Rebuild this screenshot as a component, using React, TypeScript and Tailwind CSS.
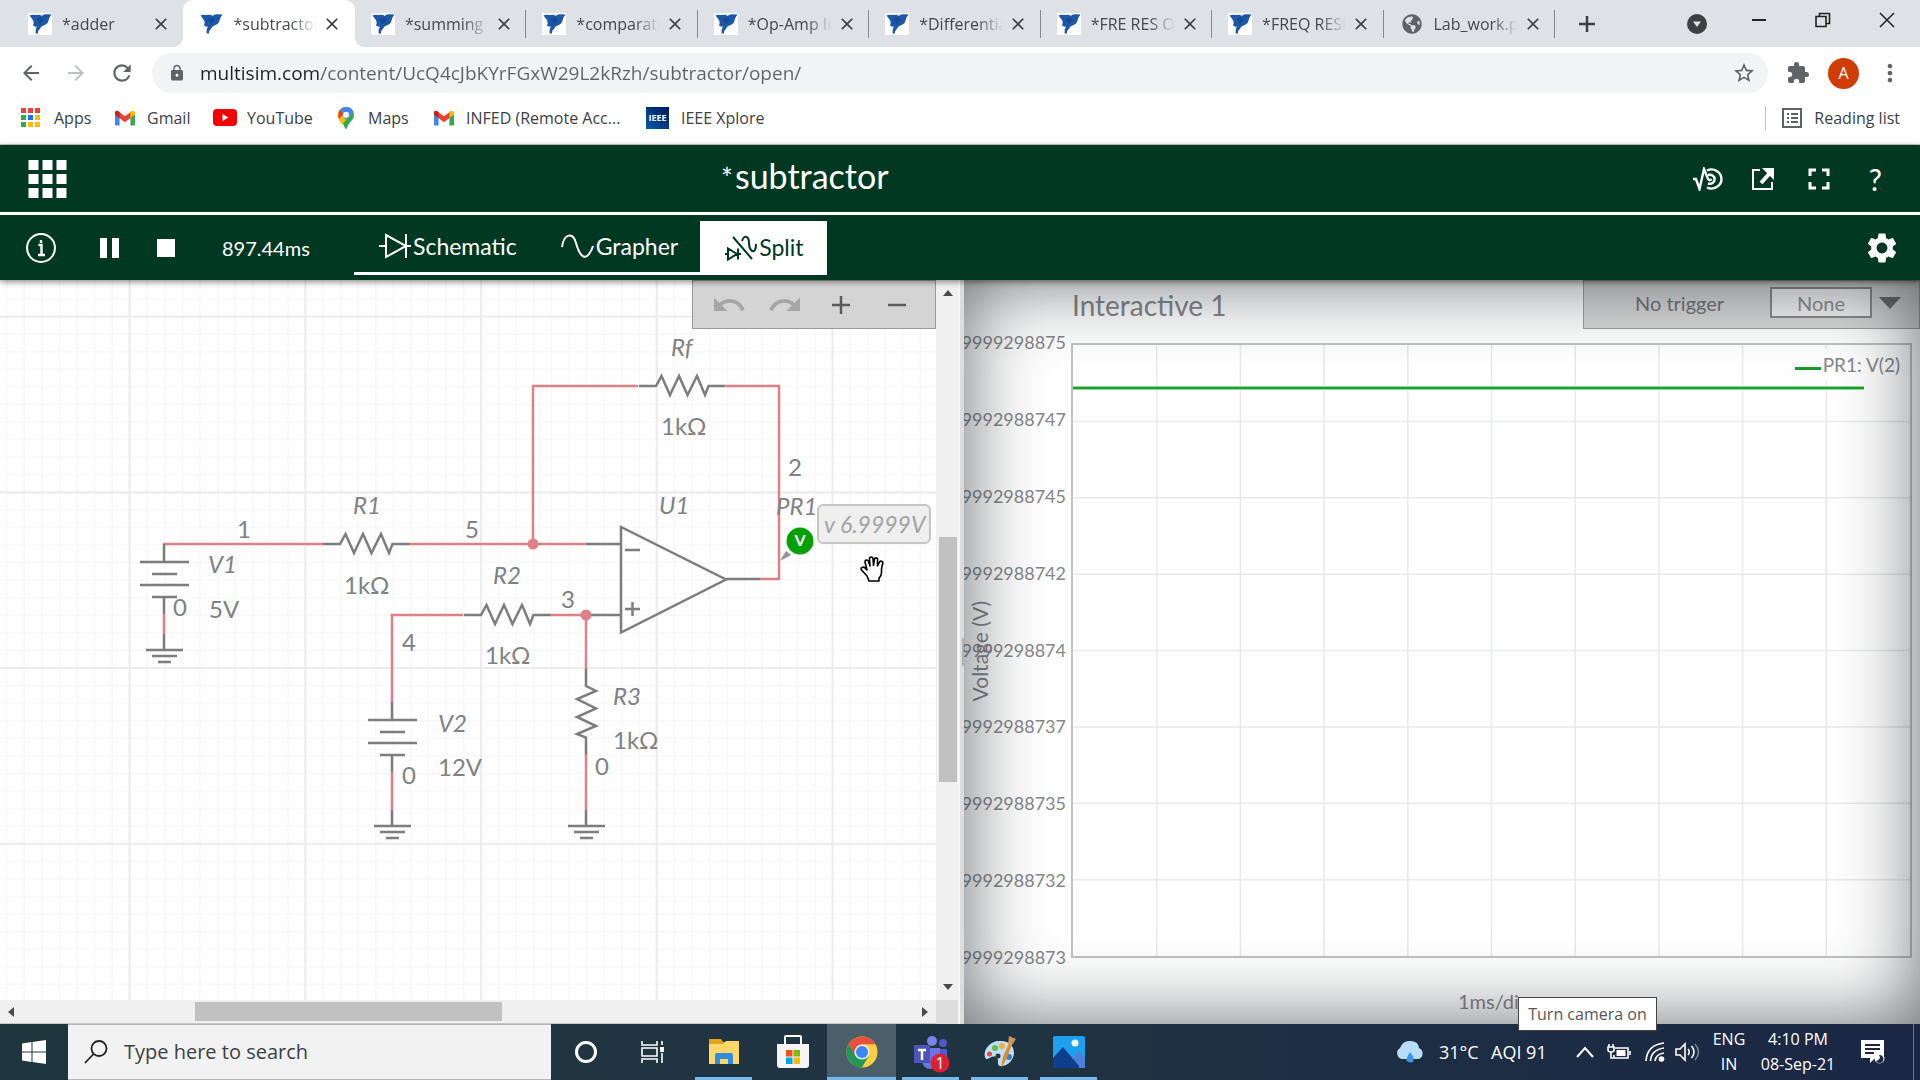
import React from 'react';
import { FaGlobeAmericas } from 'react-icons/fa';
import {
  MdArrowBack,
  MdArrowForward,
  MdClose,
  MdExtension,
  MdFullscreen,
  MdLock,
  MdMoreVert,
  MdRedo,
  MdRefresh,
  MdSettings,
  MdStarBorder,
  MdUndo,
} from 'react-icons/md';

/* ---------- small drawings ---------- */

function EagleIcon() {
  return (
    <svg viewBox="0 0 24 22" className="h-[22px] w-6 shrink-0 bg-white" aria-hidden="true">
      <path
        d="M1.500 2.500 Q4 1.200 7 2 L12 1.800 L13.500 3 Q15.500 .8 18.500 1.200 L23.500 1.600 L21.500 4.500 L20.500 7.500 Q20 10.500 16.500 12 L13.500 13.500 Q12 16 10.500 17.500 L9.500 21 L7.500 20 Q7 16 9 13.500 L7.500 13.800 L5 12.500 Q6.500 9 4.500 6.500 Z"
        fill="#1d57a8"
      />
      <path d="M8 6 L13 4.500 L16 7 L12 11 Z" fill="#164a94" />
    </svg>
  );
}

function GmailIcon() {
  return (
    <svg viewBox="0 0 24 18" className="h-4 w-5 shrink-0" aria-hidden="true">
      <path d="M0 3v13.500Q0 18 1.500 18H5.500V7Z" fill="#4285f4" />
      <path d="M24 3v13.500Q24 18 22.500 18H18.500V7Z" fill="#34a853" />
      <path d="M0 2.500Q.5 -.5 3.500 .5L12 7 20.500 .5 V7.500L12 14 0 5Z" fill="#ea4335" />
      <path d="M18.500 2L20.500 .5Q23.500 -.5 24 2.500V5L18.500 9Z" fill="#fbbc04" />
      <path d="M0 2.500V5L5.500 9V2L3.500 .5Q.5 -.5 0 2.500Z" fill="#c5221f" />
    </svg>
  );
}

function AppsIcon() {
  const colors = ['#ea4335', '#ea4335', '#ea4335', '#34a853', '#1a73e8', '#fbbc04', '#34a853', '#fbbc04', '#fbbc04'];
  return (
    <svg viewBox="0 0 19 19" className="size-[19px] shrink-0" aria-hidden="true">
      {colors.map((c, i) => (
        <rect key={i} x={(i % 3) * 7} y={Math.floor(i / 3) * 7} width="5" height="5" fill={c} />
      ))}
    </svg>
  );
}

function YouTubeIcon() {
  return (
    <svg viewBox="0 0 24 17" className="h-[17px] w-6 shrink-0" aria-hidden="true">
      <rect width="24" height="17" rx="4" fill="#f60000" />
      <path d="M9.500 5v7l6-3.500z" fill="#fff" />
    </svg>
  );
}

function MapsIcon() {
  return (
    <svg viewBox="0 0 16 22" className="h-[22px] w-4 shrink-0" aria-hidden="true">
      <path d="M8 0a8 8 0 0 1 8 8c0 5-5 7-6.500 12Q8 24 6.500 20C5 15 0 13 0 8a8 8 0 0 1 8-8z" fill="#34a853" />
      <path d="M8 0a8 8 0 0 1 7.500 5L4 17.500Q0 13 0 8A8 8 0 0 1 8 0z" fill="#fbbc04" />
      <path d="M8 0a8 8 0 0 1 7.500 5L8 13 1.500 4Q4 0 8 0z" fill="#4285f4" />
      <path d="M1.800 3L6 7 1 12Q-1 7 1.800 3z" fill="#ea4335" />
      <circle cx="8" cy="7.800" r="3" fill="#fff" />
    </svg>
  );
}

function ReadingListIcon() {
  return (
    <svg viewBox="0 0 20 20" className="size-5 shrink-0" fill="none" stroke="#5f6368" strokeWidth="2" aria-hidden="true">
      <rect x="1" y="1" width="18" height="18" />
      <path d="M5 6h2M5 10h2M5 14h2M9 6h7M9 10h7M9 14h7" />
    </svg>
  );
}

function GridIcon() {
  return (
    <svg viewBox="0 0 40 40" className="size-10" fill="#fff" aria-hidden="true">
      {[0, 1, 2].map((r) =>
        [0, 1, 2].map((c) => <rect key={`${r}-${c}`} x={c * 14 + 0.5} y={r * 14 + 1} width="10" height="10" />),
      )}
    </svg>
  );
}

function WaveIcon() {
  return (
    <svg viewBox="0 0 34 24" className="h-6 w-[34px]" fill="none" stroke="currentColor" strokeWidth="2" aria-hidden="true">
      <path d="M1 13C3 -1 12 -2 15 9S23 27 28 20Q31 16 32 12" />
    </svg>
  );
}

function DiodeIcon() {
  return (
    <svg viewBox="0 0 34 26" className="h-[26px] w-[34px]" fill="none" stroke="currentColor" strokeWidth="2" aria-hidden="true">
      <path d="M1 13h7M8 2v22L28 13zM28 1v24M28 13h5" />
    </svg>
  );
}

function SplitIcon() {
  return (
    <svg viewBox="0 0 34 26" className="h-[26px] w-[34px]" fill="none" stroke="currentColor" strokeWidth="2" aria-hidden="true">
      <path d="M1 19h3M4 13.500v11L13 19zM14 13.500v11M14 19h3" />
      <path d="M9 2L28 24" />
      <path d="M18 6C20 -1 25 1 25 8S29 18 31 15Q32 13 32 9" />
    </svg>
  );
}

function HandCursor() {
  return (
    <svg viewBox="0 0 26 26" className="absolute left-[860px] top-[276px] size-[26px]" aria-hidden="true">
      <path
        d="M9 25L7 20 2 14.500Q0 12.500 2 11.500T5 12L7 14 5 6Q5 4 6.500 4T8.500 5.500L10 10 9.500 3Q9.500 1 11.200 1T13 3L13.500 9.500 14.500 3Q15 1.500 16.500 2T17.500 4.500L17.500 10 19.500 6Q20.500 4.500 22 5.500T22.500 8L21.500 13Q22 20 19 22L19 25Z"
        fill="#fff"
        stroke="#000"
        strokeWidth="1.600"
        strokeLinejoin="round"
      />
    </svg>
  );
}

/* ---------- browser chrome ---------- */

const TABS = ['*adder', '*subtractor', '*summing a', '*comparator', '*Op-Amp In', '*Differentiator', '*FRE RES OF', '*FREQ RESP', 'Lab_work.pdf'];

function TabStrip() {
  return (
    <div className="flex h-[47px] bg-[#dee1e6] pl-3">
      <div className="flex w-[1543px] min-w-0">
        {TABS.map((t, i) => {
          const active = i === 1;
          return (
            <div
              key={t}
              className={
                active
                  ? 'relative flex min-w-0 flex-1 items-center rounded-t-[10px] bg-white pl-4 before:absolute before:bottom-0 before:-left-2.5 before:size-2.5 before:bg-[radial-gradient(circle_at_0_0,transparent_10px,#fff_10px)] after:absolute after:-right-2.5 after:bottom-0 after:size-2.5 after:bg-[radial-gradient(circle_at_100%_0,transparent_10px,#fff_10px)]'
                  : 'relative flex min-w-0 flex-1 items-center pl-4'
              }
            >
              {i === 8 ? <FaGlobeAmericas className="mx-0.5 size-5 shrink-0 text-[#5f6368]" /> : <EagleIcon />}
              <button className="ml-2.5 w-[84px] overflow-hidden whitespace-nowrap text-left text-base text-[#45494d] [mask-image:linear-gradient(to_right,#000_58px,transparent_84px)]">
                {t}
              </button>
              <button aria-label={`Close ${t}`} className="ml-[5px] text-[#3c4043]">
                <MdClose className="size-5" />
              </button>
              {i > 1 && <span className="absolute right-0 h-7 w-px bg-[#85888c]" />}
            </div>
          );
        })}
      </div>
      <button aria-label="New tab" className="ml-5 flex w-6 items-center justify-center">
        <svg viewBox="0 0 18 18" className="size-[18px]" stroke="#3c4043" strokeWidth="2.500" aria-hidden="true">
          <path d="M9 1v16M1 9h16" />
        </svg>
      </button>
      <div className="ml-auto flex pr-px">
        <button aria-label="Search tabs" className="mr-5 flex items-center">
          <svg viewBox="0 0 20 20" className="size-5" aria-hidden="true">
            <circle cx="10" cy="10" r="10" fill="#3c4043" />
            <path d="M6 7.500h8L10 13z" fill="#dee1e6" />
          </svg>
        </button>
        <button aria-label="Minimize" className="flex h-10 w-16 items-center justify-center">
          <span className="h-0.5 w-3.5 bg-[#222]" />
        </button>
        <button aria-label="Restore" className="flex h-10 w-16 items-center justify-center">
          <svg viewBox="0 0 16 16" className="size-4" fill="none" stroke="#222" strokeWidth="1.600" aria-hidden="true">
            <path d="M1 4.500h10v10H1zM4.500 4.500V1.500H14.500v10H11" />
          </svg>
        </button>
        <button aria-label="Close window" className="flex h-10 w-16 items-center justify-center">
          <svg viewBox="0 0 16 16" className="size-4" stroke="#222" strokeWidth="1.500" aria-hidden="true">
            <path d="M1 1l14 14M15 1L1 15" />
          </svg>
        </button>
      </div>
    </div>
  );
}

function AddressRow() {
  return (
    <div className="flex h-[50px] items-center bg-white pt-0.5 pl-[19px]">
      <button aria-label="Back" className="w-[45px] text-[#5f6368]"><MdArrowBack className="size-6" /></button>
      <button aria-label="Forward" className="w-[45px] text-[#bdc1c6]"><MdArrowForward className="size-6" /></button>
      <button aria-label="Reload" className="w-[43px] text-[#5f6368]"><MdRefresh className="size-[26px]" /></button>
      <div className="flex h-10 min-w-0 flex-1 items-center rounded-full bg-[#f1f3f4] pr-3 pl-4">
        <MdLock className="size-[18px] shrink-0 text-[#5f6368]" />
        <input
          aria-label="Address"
          defaultValue="multisim.com/content/UcQ4cJbKYrFGxW29L2kRzh/subtractor/open/"
          className="ml-3.5 min-w-0 flex-1 bg-[linear-gradient(to_right,#202124_121px,#5f6368_121px)] bg-clip-text text-[19px] text-transparent outline-none"
        />
        <button aria-label="Bookmark" className="text-[#5f6368]"><MdStarBorder className="size-6" /></button>
      </div>
      <button aria-label="Extensions" className="ml-[18px] text-[#5f6368]"><MdExtension className="size-6" /></button>
      <button aria-label="Profile" className="ml-[18px] flex size-[31px] items-center justify-center rounded-full bg-[#d03c06] text-base text-white">A</button>
      <button aria-label="Menu" className="mr-4 ml-[17px] text-[#5f6368]"><MdMoreVert className="size-7" /></button>
    </div>
  );
}

function Bookmarks() {
  return (
    <nav className="flex h-[48px] items-center border-b border-[#c9cccf] bg-white pr-5 pb-1.5 pl-[21px] text-base text-[#3c4043]">
      <a href="#apps" className="flex w-[94px] items-center gap-3.5"><AppsIcon />Apps</a>
      <a href="#gmail" className="flex w-[98px] items-center gap-3"><GmailIcon />Gmail</a>
      <a href="#youtube" className="flex w-[125px] items-center gap-2.5"><YouTubeIcon />YouTube</a>
      <a href="#maps" className="flex w-[96px] items-center gap-3.5"><MapsIcon />Maps</a>
      <a href="#infed" className="flex w-[212px] items-center gap-3 whitespace-nowrap"><GmailIcon />INFED (Remote Acc...</a>
      <a href="#ieee" className="flex items-center gap-3 whitespace-nowrap">
        <span className="flex h-[22px] w-[23px] items-center justify-center bg-linear-to-tr from-[#0a5ca8] to-[#02145e] text-[9px] font-bold text-white">IEEE</span>
        IEEE Xplore
      </a>
      <button className="ml-auto flex items-center gap-3 border-l border-[#c4c7ca] pl-4 whitespace-nowrap"><ReadingListIcon />Reading list</button>
    </nav>
  );
}

/* ---------- application header ---------- */

function AppHeader() {
  return (
    <header className="relative z-10 font-[Lato,sans-serif] text-white shadow-[0_2px_6px_rgba(0,0,0,0.45)]">
      <div className="flex h-[67px] items-center bg-[#003822] px-7">
        <button aria-label="Menu grid"><GridIcon /></button>
        <h1 className="flex flex-1 items-baseline gap-0.5 pb-1 pl-[653px] text-[34px] leading-10"><span className="text-[28px]">*</span>subtractor</h1>
        <button aria-label="Interactive simulation">
          <svg viewBox="0 0 32 24" className="h-6 w-8" fill="none" stroke="#fff" strokeWidth="2.400" aria-hidden="true">
            <path d="M1 12h3l3.500 10L12 2l4 10q1.500 2.500 3.500 0" />
            <path d="M15 3.500a10 9.500 0 1 1 0 17M16 8a5 4.500 0 1 1 0 8.500" />
          </svg>
        </button>
        <button aria-label="Open externally" className="ml-7">
          <svg viewBox="0 0 22 22" className="size-[22px]" fill="none" stroke="#fff" strokeWidth="2" aria-hidden="true">
            <path d="M8 2H1v19h19v-7" />
            <path d="M9 15L17 6" strokeWidth="4" />
            <path d="M10 0h12v12z" fill="#fff" stroke="none" />
          </svg>
        </button>
        <button aria-label="Fullscreen" className="ml-[27px]"><MdFullscreen className="size-9" /></button>
        <button aria-label="Help" className="ml-8 pr-2.5 text-[30px] leading-9">?</button>
      </div>
      <div className="h-[3px] bg-white" />
      <div className="flex h-[65px] items-center bg-[#003822] px-6">
        <button aria-label="Information">
          <svg viewBox="0 0 34 34" className="size-[34px]" fill="none" stroke="#fff" strokeWidth="2" aria-hidden="true">
            <circle cx="17" cy="17" r="14" />
            <path d="M14.500 14H17.500V24M14 24h7M17 9v3" strokeWidth="2.400" />
          </svg>
        </button>
        <button aria-label="Pause" className="ml-[42px] flex gap-[5px]"><span className="h-5 w-[7px] bg-white" /><span className="h-5 w-[7px] bg-white" /></button>
        <button aria-label="Stop" className="ml-[38px] size-[18px] bg-white" />
        <output className="ml-[47px] w-[132px] text-xl">897.44ms</output>
        <div className="flex h-[54px] text-[23px]">
          <button className="flex items-center gap-px border-b-[3px] border-white pr-11 pl-6"><DiodeIcon />Schematic</button>
          <button className="flex items-center gap-px border-b-[3px] border-white pr-[22px]"><WaveIcon />Grapher</button>
          <button className="flex w-[127px] items-center gap-px bg-white pl-6 text-[#003822]"><SplitIcon />Split</button>
        </div>
        <button aria-label="Settings" className="ml-auto"><MdSettings className="-mr-1 size-9" /></button>
      </div>
    </header>
  );
}

/* ---------- schematic ---------- */

const ZIG = 'l5.500 -10 8.500 19 9 -19 8.500 19 9.500 -19 8 19 3.500 -9';

function Resistor({ x, y }: { x: number; y: number }) {
  return <path d={`M${x - 17} ${y}h17${ZIG}h17`} />;
}

function Battery({ x, y }: { x: number; y: number }) {
  return (
    <path
      d={`M${x} ${y}v18M${x - 24} ${y + 18}h49M${x - 12} ${y + 30}h25M${x - 24} ${y + 41}h49M${x - 12} ${y + 53}h25M${x} ${y + 53}v17`}
    />
  );
}

function Ground({ x, y }: { x: number; y: number }) {
  return <path d={`M${x} ${y - 16}v16M${x - 18} ${y}h37M${x - 12} ${y + 6}h25M${x - 6} ${y + 12}h13`} />;
}

const NAMES: [number, number, string][] = [
  [671, 356, 'Rf'], [353, 514, 'R1'], [659, 514, 'U1'], [776, 515, 'PR1'],
  [208, 573, 'V1'], [493, 584, 'R2'], [438, 732, 'V2'], [613, 705, 'R3'],
];

const VALUES: [number, number, string][] = [
  [661, 435, '1kΩ'], [788, 476, '2'], [237, 538, '1'], [465, 538, '5'], [344, 594, '1kΩ'],
  [173, 616, '0'], [209, 618, '5V'], [561, 608, '3'], [485, 664, '1kΩ'], [402, 651, '4'],
  [438, 776, '12V'], [402, 784, '0'], [613, 749, '1kΩ'], [595, 775, '0'],
];

const steps = (from: number, gap: number, count: number) => Array.from({ length: count }, (_, i) => from + i * gap);

function Schematic() {
  return (
    <svg className="absolute inset-0 size-full" role="img" aria-label="Subtractor circuit">
      <g transform="translate(0 -280)">
        <g stroke="#f8f8f8" strokeWidth="1.500">
          {steps(6.8, 17.57, 110).map((x) => <line key={x} x1={x} x2={x} y1="280" y2="1400" />)}
          {steps(299, 17.57, 60).map((y) => <line key={y} x1="0" x2="1920" y1={y} y2={y} />)}
        </g>
        <g stroke="#ececec" strokeWidth="2">
          {steps(129.7, 175.7, 10).map((x) => <line key={x} x1={x} x2={x} y1="280" y2="1400" />)}
          {steps(316.7, 175.7, 6).map((y) => <line key={y} x1="0" x2="1920" y1={y} y2={y} />)}
        </g>
        <g fill="none" stroke="#df7f88" strokeWidth="2.500">
          <path d="M163 544H323M409 544H586M533 544V386H638M726 386H779V579H760" />
          <path d="M164 614V634M392 703V615H463M550 615H590M586 615V669M586 754V810M392 772V810" />
        </g>
        <g fill="none" stroke="#7b7d7f" strokeWidth="2.500">
          <Resistor x={340} y={544} />
          <Resistor x={481} y={615} />
          <Resistor x={656} y={386} />
          <path d="M586 669v17l10 5-19 8 19 9.500-19 8.500 19 9-19 8 9 3.500v17" />
          <path d="M586 544H621M586 615H621M726 579H760" />
          <path d="M621 527V632.500L726 579.500Z" />
          <path d="M625 550h15M625 609h15M632.500 602v14" />
          <Battery x={164} y={544} />
          <Battery x={392} y={702} />
          <Ground x={164} y={650} />
          <Ground x={392} y={826} />
          <Ground x={586} y={826} />
        </g>
        <circle cx="533" cy="544" r="5.500" fill="#df7f88" />
        <circle cx="586" cy="615" r="5.500" fill="#df7f88" />
        <g fill="#7f8183" className="font-[Lato,sans-serif] text-2xl">
          {NAMES.map(([x, y, t]) => <text key={t} x={x} y={y} fontStyle="italic">{t}</text>)}
          {VALUES.map(([x, y, t]) => <text key={`${x}-${y}`} x={x} y={y}>{t}</text>)}
        </g>
        <path d="M780 561L786 551 791 555Z" fill="#8f9193" />
        <circle cx="800" cy="541" r="13.500" fill="#06a006" />
        <text x="800" y="546" textAnchor="middle" fill="#fff" className="font-[Lato,sans-serif] text-base font-bold">V</text>
        <rect x="818" y="505" width="112" height="38" rx="5" fill="#efefef" stroke="#c6c6c6" strokeWidth="2" />
        <text x="824" y="533" fill="#a3a3a3" fontStyle="italic" className="font-[Lato,sans-serif] text-[23px]">v 6.9999V</text>
      </g>
    </svg>
  );
}

function SchematicPanel() {
  return (
    <section className="grid min-h-0 grid-cols-[1fr_22px_6px] grid-rows-[1fr_24px] bg-[#f0f0f0]">
      <div className="relative overflow-hidden bg-[#fefefe]">
        <Schematic />
        <div className="absolute top-0 right-0 flex h-[49px] w-[244px] border border-[#9a9a9a] bg-[#d4d4d4] pl-2 text-[#5a5a5a]">
          <button aria-label="Undo" className="flex w-14 items-center justify-center text-[#a6a6a6]"><MdUndo className="size-9" /></button>
          <button aria-label="Redo" className="flex w-14 items-center justify-center text-[#a6a6a6]"><MdRedo className="size-9" /></button>
          <button aria-label="Zoom in" className="flex w-14 items-center justify-center">
            <svg viewBox="0 0 20 20" className="size-5" stroke="currentColor" strokeWidth="2.500" aria-hidden="true"><path d="M10 1v18M1 10h18" /></svg>
          </button>
          <button aria-label="Zoom out" className="flex w-14 items-center justify-center">
            <svg viewBox="0 0 20 20" className="size-5" stroke="currentColor" strokeWidth="2.500" aria-hidden="true"><path d="M1 10h18" /></svg>
          </button>
        </div>
        <HandCursor />
      </div>
      <div className="flex flex-col items-center py-2.5 pl-0.5">
        <span className="size-0 border-x-5 border-b-6 border-x-transparent border-b-[#4a4a4a]" />
        <span className="min-h-0 flex-[241]" />
        <span className="min-h-0 w-[18px] flex-[245] bg-[#c1c1c1]" />
        <span className="min-h-0 flex-[202]" />
        <span className="size-0 border-x-5 border-t-6 border-x-transparent border-t-[#4a4a4a]" />
      </div>
      <div className="row-span-2 flex items-center border-l-2 border-[#f6f6f6] bg-[#dcdcdc]">
        <span className="ml-auto h-7 w-0.5 bg-[#b0b0b0]" />
      </div>
      <div className="flex items-center border-b border-[#c9c9c9] px-2">
        <span className="size-0 border-y-5 border-r-6 border-y-transparent border-r-[#4a4a4a]" />
        <span className="flex-[181]" />
        <span className="h-[19px] flex-[307] bg-[#c1c1c1]" />
        <span className="flex-[420]" />
        <span className="size-0 border-y-5 border-l-6 border-y-transparent border-l-[#4a4a4a]" />
      </div>
      <div className="bg-[#dcdcdc]" />
    </section>
  );
}

/* ---------- grapher ---------- */

const Y_LABELS = ['6.9999298875', '6.99992988747', '6.99992988745', '6.99992988742', '6.9999298874', '6.99992988737', '6.99992988735', '6.99992988732', '6.9999298873'];

function GrapherPanel() {
  return (
    <section className="relative flex min-h-0 flex-col overflow-hidden bg-white font-[Lato,sans-serif] text-[#858789]">
      <div className="flex h-[49px] items-center">
        <h2 className="flex-1 pl-[108px] text-[28px] leading-8">Interactive 1</h2>
        <div className="flex h-full w-[337px] items-center border border-[#a0a0a0] bg-[#d9d9d9] pb-1 pl-[51px] text-xl text-[#737577]">
          <label htmlFor="trigger" className="w-[135px]">No trigger</label>
          <select id="trigger" className="h-[31px] w-[102px] appearance-none border-2 border-[#8b8b8b] bg-[#f4f4f4] text-[20px] leading-5 text-[#8d8f91] [text-align-last:center]">
            <option>None</option>
          </select>
          <button aria-label="Trigger options" className="ml-[7px] size-0 border-x-11 border-t-12 border-x-transparent border-t-[#6d6d6d]" />
        </div>
      </div>
      <div className="mt-3.5 flex min-h-0 flex-1 pr-2">
        <div className="-mt-[13px] -mb-[11px] flex w-[107px] flex-col justify-between overflow-hidden pr-[5px] text-lg leading-6">
          {Y_LABELS.map((l) => (
            <div key={l} className="flex justify-end"><span>{l}</span></div>
          ))}
        </div>
        <div className="relative min-w-0 flex-1 border-2 border-[#c2c2c2]">
          <svg className="absolute inset-0 size-full" role="img" aria-label="Probe voltage over time">
            {steps(10, 10, 9).map((p) => <line key={p} x1={`${p}%`} x2={`${p}%`} y1="0" y2="100%" stroke="#e8e9ea" strokeWidth="1.500" />)}
            {steps(12.5, 12.5, 7).map((p) => <line key={p} y1={`${p}%`} y2={`${p}%`} x1="0" x2="100%" stroke="#e8e9ea" strokeWidth="1.500" />)}
            <line x1="0" x2="94.500%" y1="43" y2="43" stroke="#8fdc94" strokeWidth="4" />
            <line x1="0" x2="94.500%" y1="43" y2="43" stroke="#229a30" strokeWidth="2" />
          </svg>
          <div className="absolute top-1 right-2.5 flex h-8 items-center gap-0.5 bg-white text-[19px]">
            <span className="mt-1.5 h-[3px] w-[26px] bg-[#1d9a2c]" />PR1: V(2)
          </div>
        </div>
      </div>
      <div className="flex h-[66px] items-end justify-center pb-[9px] pl-[103px] text-xl">1ms/div</div>
      <div className="absolute top-[308px] left-1.5 h-[126px] text-center text-[21px] leading-5 [writing-mode:sideways-lr]">Voltage (V)</div>
      <div className="pointer-events-none absolute inset-0 shadow-[inset_0_0_80px_rgba(20,25,30,0.65)]" />
    </section>
  );
}

/* ---------- taskbar ---------- */

function TaskItem({ label, active, open, children }: { label: string; active?: boolean; open?: boolean; children: React.ReactNode }) {
  return (
    <button
      aria-label={label}
      className={active ? 'relative flex w-[69px] items-center justify-center bg-[#4b5f6b]' : 'relative flex w-[69px] items-center justify-center'}
    >
      {children}
      {open && <span className={active ? 'absolute inset-x-0 bottom-0 h-[3px] bg-[#76b9ed]' : 'absolute inset-x-1.5 bottom-0 h-[3px] bg-[#76b9ed]'} />}
    </button>
  );
}

function Taskbar() {
  return (
    <footer className="flex h-14 shrink-0 bg-linear-to-r from-[#20363f] via-[#1f3441] to-[#1b2745] text-white">
      <button aria-label="Start" className="flex w-[68px] items-center justify-center">
        <svg viewBox="0 0 24 24" className="size-6" fill="#fff" aria-hidden="true">
          <path d="M0 3.500L9.500 2v9.500H0zM10.500 2L24 0v11.500H10.500zM0 12.500h9.500V22L0 20.500zM10.500 12.500H24V24L10.500 22z" />
        </svg>
      </button>
      <label className="flex w-[483px] items-center gap-4 border-y border-[#b5b5b5] bg-[#f2f2f2] pl-4">
        <svg viewBox="0 0 24 24" className="size-6" fill="none" stroke="#222" strokeWidth="1.800" aria-hidden="true">
          <circle cx="15" cy="8.500" r="7.500" /><path d="M9.500 14L1 23" />
        </svg>
        <input aria-label="Search" placeholder="Type here to search" className="min-w-0 flex-1 text-xl outline-none placeholder:text-[#3a4145]" />
      </label>
      <TaskItem label="Cortana">
        <span className="size-[22px] rounded-full border-3 border-white" />
      </TaskItem>
      <TaskItem label="Task view">
        <svg viewBox="0 0 24 24" className="-ml-1 size-6" fill="none" stroke="#fff" strokeWidth="1.600" aria-hidden="true">
          <path d="M1 1v4h15V1M1 8h15v8H1zM1 23v-4h15v4M21 1v4M21 13v10" /><path d="M21 7v5" strokeWidth="4" />
        </svg>
      </TaskItem>
      <TaskItem label="File Explorer" open>
        <svg viewBox="0 0 32 28" className="h-7 w-8" aria-hidden="true">
          <path d="M1 1h12l2 3h16v22H1z" fill="#e3a21a" /><path d="M1 6h14l3-3h13v23H1z" fill="#ffd869" />
          <path d="M7 26v-9q0-2 2-2h14q2 0 2 2v9h-5v-5h-8v5z" fill="#2f8de0" />
        </svg>
      </TaskItem>
      <TaskItem label="Microsoft Store">
        <svg viewBox="0 0 34 34" className="size-[34px]" aria-hidden="true">
          <path d="M9 10V2q0-1 1-1h14q1 0 1 1v8" fill="none" stroke="#fff" strokeWidth="2" />
          <path d="M1 9h32v21q0 3-3 3H4q-3 0-3-3z" fill="#f5f5f5" />
          <path d="M10 15h6.500v6.500H10z" fill="#f25022" /><path d="M17.500 15H24v6.500h-6.500z" fill="#7fba00" />
          <path d="M10 22.500h6.500V29H10z" fill="#00a4ef" /><path d="M17.500 22.500H24V29h-6.500z" fill="#ffb900" />
        </svg>
      </TaskItem>
      <TaskItem label="Chrome" active open>
        <svg viewBox="0 0 32 32" className="size-8" aria-hidden="true">
          <circle cx="16" cy="16" r="15.500" fill="#ffcd40" />
          <path d="M16 16L2.600 8.200A15.500 15.500 0 0 0 16 31.500L22.700 19.900Z" fill="#1e9a56" />
          <path d="M2.600 8.200A15.500 15.500 0 0 1 29.400 8.200H16L9.300 19.900Z" fill="#e8503c" />
          <circle cx="16" cy="16" r="7.600" fill="#e8eef8" /><circle cx="16" cy="16" r="6" fill="#3f83f5" />
        </svg>
      </TaskItem>
      <TaskItem label="Teams, 1 notification" open>
        <svg viewBox="0 0 38 38" className="mt-1 size-[38px]" aria-hidden="true">
          <circle cx="20" cy="6" r="5" fill="#7b83eb" /><circle cx="31" cy="8" r="4" fill="#5059c9" />
          <path d="M25 14h10v10q-2 6-8 6z" fill="#5059c9" /><path d="M12 13h16v14q-4 7-10 7t-8-7z" fill="#6d75de" />
          <rect x="2" y="10" width="16" height="18" rx="1" fill="#4b53bc" /><path d="M6 15h8M10 15v10" stroke="#fff" strokeWidth="2.500" />
          <circle cx="28" cy="28" r="9.500" fill="#dd1f33" /><text x="28" y="33.500" textAnchor="middle" fill="#fff" className="text-base">1</text>
        </svg>
      </TaskItem>
      <TaskItem label="Paint" open>
        <svg viewBox="0 0 34 34" className="size-[34px]" aria-hidden="true">
          <path d="M16 6C26 5 31 11 31 18S24 32 17 31C13 30 17 25 13 22S4 28 2 22C0 14 8 6 16 6z" fill="#bfe0f2" />
          <circle cx="12" cy="13" r="3" fill="#66bb4a" /><circle cx="6.500" cy="19" r="2.500" fill="#e0503c" />
          <circle cx="19" cy="11" r="3" fill="#f0b23c" /><circle cx="15" cy="21" r="2.500" fill="#26343c" />
          <circle cx="26" cy="22" r="3" fill="#3b7ed0" />
          <path d="M18 33L20 22 26 8 29 9 24 23Z" fill="#e08a2c" /><path d="M25 9L26 1 33 4 29 10Z" fill="#c9975c" />
        </svg>
      </TaskItem>
      <TaskItem label="Photos" open>
        <svg viewBox="0 0 32 32" className="size-8" aria-hidden="true">
          <rect width="32" height="32" rx="2" fill="#1ea0ef" /><path d="M12 32L26 15 32 22V32z" fill="#4f7fd8" />
          <path d="M0 22L10 11 26 30V32H0z" fill="#0e3f8c" /><circle cx="22" cy="7" r="3.500" fill="#f5f9e8" />
        </svg>
      </TaskItem>
      <div className="ml-auto flex items-center text-base">
        <button className="flex items-center text-left text-lg whitespace-nowrap">
          <svg viewBox="0 0 30 24" className="mr-3.5 h-6 w-[30px]" aria-hidden="true">
            <path d="M7 19A6 6 0 0 1 5 8Q8 0 16 1T24 8A6 6 0 0 1 24 19Z" fill="#b8ddf8" />
            <path d="M15 12q5 6 3.500 9t-7 0Q11 18 15 12z" fill="#3b96ea" />
          </svg>
          <span className="w-[52px]">31°C</span>
          <span className="w-[84px]">AQI 91</span>
        </button>
        <button aria-label="Show hidden icons">
          <svg viewBox="0 0 20 12" className="h-3 w-5" fill="none" stroke="#fff" strokeWidth="2" aria-hidden="true"><path d="M2 11l8-9 8 9" /></svg>
        </button>
        <svg viewBox="0 0 24 18" className="ml-3 h-[18px] w-6" fill="none" stroke="#fff" strokeWidth="1.600" aria-hidden="true">
          <path d="M8 5h13v10H7v-3M23 8v4M2 1v3M6 1v3M1 4h6v3q0 2-3 2t-3-2zM4 9v6h3" /><path d="M9.500 7h9v6h-9z" fill="#fff" stroke="none" />
        </svg>
        <svg viewBox="0 0 20 20" className="ml-3.5 size-5" fill="none" stroke="#fff" strokeWidth="1.600" aria-hidden="true">
          <path d="M1 19Q2 3 19 1M5.500 19Q6 8 19 6M10 19q1-7 9-8" /><circle cx="16.500" cy="17" r="2" fill="#fff" />
        </svg>
        <svg viewBox="0 0 26 20" className="ml-2.5 h-5 w-[26px]" fill="none" stroke="#fff" strokeWidth="1.600" aria-hidden="true">
          <path d="M1 7h4l5-5v16l-5-5H1zM13 7q2.500 3 0 6M16.500 4q5 6 0 12" /><path d="M20 2q7 8 0 16" opacity=".4" />
        </svg>
        <button className="ml-1 flex w-12 flex-col items-center leading-[25px]"><span>ENG</span><span>IN</span></button>
        <button className="flex w-[90px] flex-col items-center leading-[25px] whitespace-nowrap"><span>4:10 PM</span><span>08-Sep-21</span></button>
        <button aria-label="Notifications" className="mr-7 ml-[18px]">
          <svg viewBox="0 0 24 24" className="size-6" aria-hidden="true">
            <path d="M0 0h23v18h-9l-5 5v-5H0z" fill="#fff" /><path d="M4 5h15M4 9h15M4 13h9" stroke="#1b2745" strokeWidth="1.800" />
            <circle cx="18.500" cy="18.500" r="5" fill="#fff" /><path d="M15 21a4 4 0 1 0 3-6q3 4-3 6z" fill="#1b2745" />
          </svg>
        </button>
        <span className="mr-1.5 h-14 w-px bg-[#6a7388]" />
      </div>
    </footer>
  );
}

export default function App() {
  return (
    <div className="relative flex h-screen flex-col overflow-hidden bg-white font-['Open_Sans',sans-serif]">
      <TabStrip />
      <AddressRow />
      <Bookmarks />
      <AppHeader />
      <main className="grid min-h-0 flex-1 grid-cols-[964fr_956fr] grid-rows-1">
        <SchematicPanel />
        <GrapherPanel />
      </main>
      <Taskbar />
      <div role="tooltip" className="absolute right-[263px] bottom-[49px] flex h-[34px] w-[139px] items-center justify-center border border-[#444] bg-white text-base whitespace-nowrap text-[#555]">
        Turn camera on
      </div>
    </div>
  );
}
